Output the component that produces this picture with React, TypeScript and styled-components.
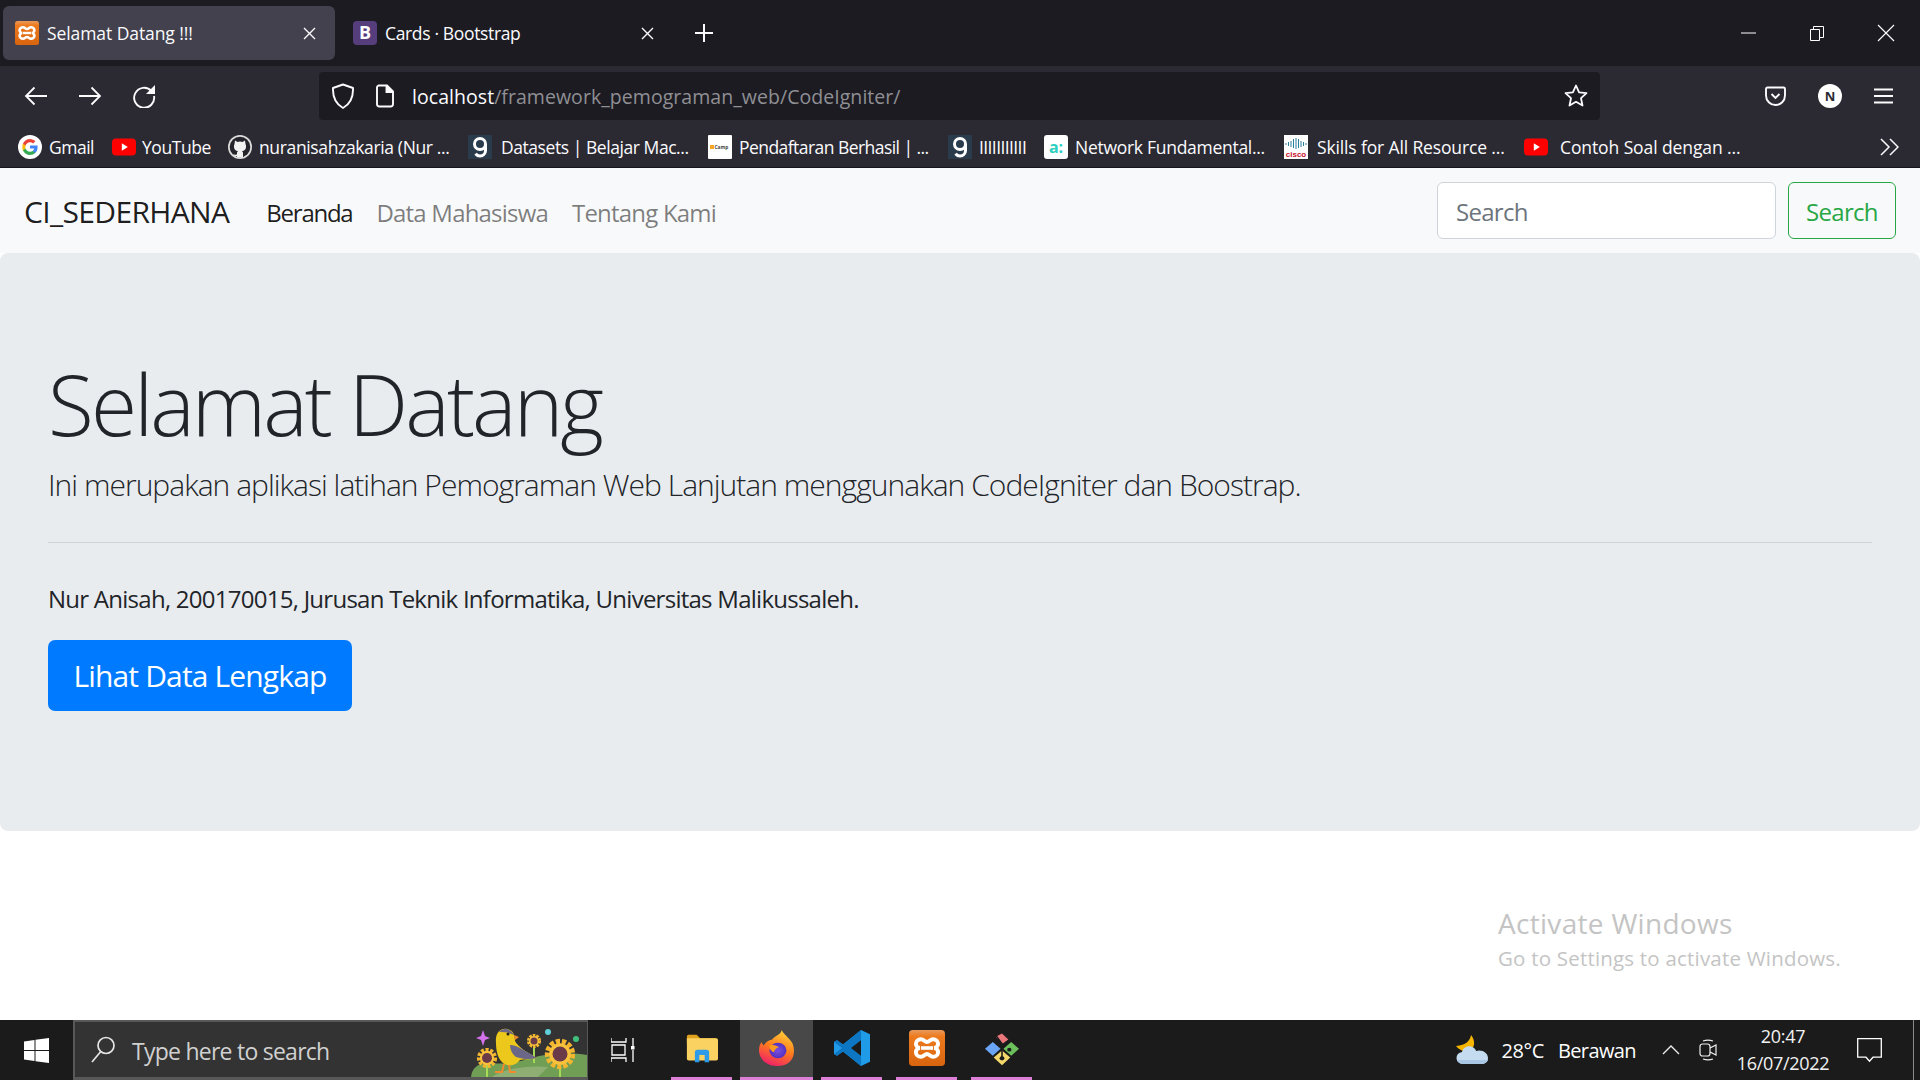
import React from 'react';
import styled, { createGlobalStyle } from 'styled-components';

const Global = createGlobalStyle`
  html, body { margin: 0; padding: 0; background: #fff; }
  body { font-family: "Open Sans", "Noto Sans", "Liberation Sans", sans-serif; color: #212529; }
  * { box-sizing: border-box; }
`;

const Screen = styled.div`
  position: relative; width: 1920px; height: 1080px; overflow: hidden;
  display: flex; flex-direction: column;
`;

/* ---------- browser chrome ---------- */
const TabStrip = styled.div`
  height: 66px; background: #1c1b22; display: flex; padding: 6px 0 6px 3px; flex: none;
`;
const Tab = styled.div<{ $active?: boolean; $w: number }>`
  width: ${p => p.$w}px; height: 54px; border-radius: 6px;
  background: ${p => (p.$active ? '#42414d' : 'transparent')};
  display: flex; align-items: center; padding: 0 19px 0 ${p => (p.$active ? 12 : 18)}px; gap: 8px; color: #fbfbfe;
`;
const TabTitle = styled.span<{ $active?: boolean }>`
  flex: 1; font-size: 17.5px; letter-spacing: ${p => (p.$active ? '-0.08px' : '-0.35px')}; white-space: nowrap;
`;
const NewTab = styled.div`
  width: 24px; height: 54px; margin-left: 19px; display: flex; align-items: center; justify-content: center;
`;
const WindowControls = styled.div`
  margin-left: auto; display: flex; align-items: center; height: 54px;
`;
const WinBtn = styled.div`
  width: 68.5px; display: flex; justify-content: center; align-items: center;
`;

const Toolbar = styled.div`
  height: 60px; background: #2b2a33; display: flex; align-items: center; padding: 0 0 0 24px; flex: none;
`;
const NavIcon = styled.div`
  width: 54px; display: flex; align-items: center; justify-content: flex-start; flex: none;
`;
const UrlBar = styled.div`
  margin-left: 133px; width: 1281px; height: 48px; background: #1c1b22; border-radius: 4px;
  display: flex; align-items: center; padding: 0 12px 0 12px; gap: 20px; color: #fbfbfe;
`;
const UrlText = styled.div`
  margin-left: -3px; flex: 1; font-size: 19.5px; letter-spacing: 0.05px; white-space: nowrap;
`;
const UrlDim = styled.span`
  color: #8f8f94;
`;
const RightTools = styled.div`
  margin-left: 165px; display: flex; align-items: center; gap: 32px;
`;

const BookmarkBar = styled.div`
  height: 42px; background: #2b2a33; display: flex; align-items: center; padding: 0 0 0 18px; flex: none;
  border-bottom: 1px solid #15141a; color: #fbfbfe;
`;
const Bookmark = styled.div<{ $w: number; $gap: number }>`
  width: ${p => p.$w}px; flex: none; display: flex; align-items: center; gap: ${p => p.$gap}px;
`;
const BookmarkLabel = styled.span<{ $ls: number }>`
  font-size: 17.5px; letter-spacing: ${p => p.$ls}px; white-space: nowrap;
`;
const Overflow = styled.div`
  margin-left: auto; margin-right: 21px; display: flex;
`;

/* ---------- page ---------- */
const Navbar = styled.nav`
  height: 85px; background: #f8f9fa; display: flex; align-items: center; padding: 0 24px; flex: none;
`;
const Brand = styled.div`
  font-size: 30px; color: rgba(0,0,0,.9); letter-spacing: -0.65px; margin-right: 37px; white-space: nowrap; padding-top: 2px;
`;
const NavLink = styled.div<{ $active?: boolean }>`
  font-size: 24px; letter-spacing: ${p => (p.$active ? '-1.25px' : '-0.8px')}; margin-right: 24px; white-space: nowrap; padding-top: 3px;
  color: ${p => (p.$active ? 'rgba(0,0,0,.9)' : 'rgba(0,0,0,.5)')};
`;
const SearchForm = styled.div`
  margin-left: auto; display: flex; gap: 12px;
`;
const SearchInput = styled.div`
  width: 339px; height: 57px; background: #fff; border: 1.5px solid #ced4da; border-radius: 6px;
  display: flex; align-items: center; padding: 2px 18px 0; font-size: 24px; color: #6c757d; letter-spacing: -0.7px;
`;
const SearchButton = styled.div`
  width: 108px; height: 57px; border: 1.5px solid #28a745; border-radius: 6px; padding-top: 2px;
  display: flex; align-items: center; justify-content: center; font-size: 24px; color: #28a745; letter-spacing: -0.7px;
`;
const Jumbotron = styled.section`
  height: 578px; background: #e9ecef; border-radius: 8px; padding: 101px 48px 0; flex: none;
`;
const Display = styled.h1`
  margin: 0; font-weight: 300; font-size: 84px; line-height: 100px; color: #212529; letter-spacing: -2.9px;
`;
const Lead = styled.p`
  margin: 8px 0 0; font-weight: 300; font-size: 30px; line-height: 45px; letter-spacing: -0.98px;
`;
const Rule = styled.hr`
  margin: 35px 0 0; border: 0; border-top: 1.5px solid rgba(0,0,0,.1);
`;
const Info = styled.p`
  margin: 38px 0 0; font-size: 24px; line-height: 36px; letter-spacing: -0.74px;
`;
const Primary = styled.div`
  margin-top: 23px; width: 304px; height: 71px; border-radius: 7px; background: #007bff; color: #fff;
  display: flex; align-items: center; justify-content: center; font-size: 30px; letter-spacing: -0.85px;
`;
const Blank = styled.div`
  flex: 1; background: #fff;
`;
const Activate = styled.div`
  position: absolute; left: 1498px; top: 905px; color: #c4c4c4; white-space: nowrap;
`;
const ActivateTitle = styled.div`
  font-size: 28px; line-height: 36px; letter-spacing: 0.3px;
`;
const ActivateSub = styled.div`
  margin-top: 3px; font-size: 20.5px; line-height: 28px; letter-spacing: 0.2px;
`;

/* ---------- taskbar ---------- */
const Taskbar = styled.footer`
  height: 60px; background: #1b1b1b; display: flex; align-items: stretch; flex: none; color: #fff;
`;
const StartBtn = styled.div`
  width: 73px; display: flex; align-items: center; justify-content: center;
`;
const SearchBox = styled.div`
  position: relative; width: 515px; background: #333; border: 2px solid #585858; border-bottom-width: 3px; border-right-width: 1px;
  display: flex; align-items: center; padding-left: 16px; gap: 17px; color: #d0d0d0; overflow: hidden;
`;
const SearchHint = styled.span`
  font-size: 23px; letter-spacing: -0.75px; padding-top: 2px;
`;
const SearchArt = styled.div`
  position: absolute; right: 0; bottom: 0; display: flex;
`;
const TaskView = styled.div`
  width: 83px; display: flex; align-items: center; justify-content: center; padding-right: 11px;
`;
const AppSlot = styled.div<{ $active?: boolean; $w: number; $next: number }>`
  position: relative; width: ${p => p.$w}px; margin-right: ${p => p.$next}px;
  display: flex; align-items: center; justify-content: center; padding-bottom: 2px;
  background: ${p => (p.$active ? '#484848' : 'transparent')};
  border-bottom: 3px solid #dd7fd6;
`;
const Tray = styled.div`
  margin-left: auto; display: flex; align-items: center;
`;
const WeatherTemp = styled.span`
  margin-left: 12px; font-size: 20px; letter-spacing: -0.4px; white-space: nowrap;
`;
const WeatherText = styled.span`
  margin-left: 14px; margin-right: 26px; font-size: 20px; letter-spacing: -0.6px; white-space: nowrap;
`;
const MeetSlot = styled.span`
  margin-left: 19px; display: flex;
`;
const Clock = styled.div`
  width: 100px; margin-left: 16px; margin-right: 24px; text-align: center; font-size: 18px; line-height: 27px; letter-spacing: -0.3px; color: #f2f2f2;
`;
const Desk = styled.div`
  width: 1px; background: #8a8a8a; margin-left: 31px; margin-right: 6px; align-self: stretch;
`;

/* ---------- drawn icons ---------- */
const Xampp = ({ size = 24, id }: { size?: number; id: string }) => (
  <svg width={size} height={size} viewBox="0 0 24 24">
    <defs>
      <linearGradient id={id} x1="0" y1="0" x2="0" y2="1">
        <stop offset="0" stopColor="#e89a5c" /><stop offset="0.18" stopColor="#ee7a1e" /><stop offset="1" stopColor="#d8650f" />
      </linearGradient>
    </defs>
    <rect width="24" height="24" rx="2.5" fill={`url(#${id})`} />
    <path d="M8 6.200c2 0 2.400 1.800 4 1.800s2-1.800 4-1.800 3.400 1.500 3.400 3-1.400 2.800-2.800 2.800c1.400 0 2.800 1.300 2.800 2.800s-1.400 3-3.400 3-2.400-1.800-4-1.800-2 1.800-4 1.800-3.400-1.500-3.400-3S6 12 7.400 12C6 12 4.600 10.700 4.600 9.200s1.400-3 3.400-3z" fill="none" stroke="#fff" strokeWidth="2.600" />
    <path d="M8 12h8" stroke="#fff" strokeWidth="2.400" />
  </svg>
);
const BootstrapIcon = () => (
  <svg width="24" height="24" viewBox="0 0 24 24">
    <rect width="24" height="24" rx="4" fill="#563d7c" />
    <text x="12" y="18" textAnchor="middle" fontFamily="Open Sans, sans-serif" fontWeight="700" fontSize="18" fill="#fff">B</text>
  </svg>
);
const Gmail = () => (
  <svg width="24" height="24" viewBox="0 0 24 24">
    <circle cx="12" cy="12" r="12" fill="#fff" />
    <path d="M19.600 12.200c0-.6-.05-1.100-.15-1.600H12v3h4.300c-.2 1-.75 1.800-1.600 2.400v2h2.500c1.500-1.400 2.400-3.400 2.400-5.800z" fill="#4285f4" />
    <path d="M12 20c2.150 0 3.950-.7 5.200-1.950l-2.500-2c-.7.470-1.600.750-2.700.750-2.100 0-3.800-1.400-4.450-3.300H4.950v2C6.250 18.100 8.900 20 12 20z" fill="#34a853" />
    <path d="M7.550 13.500c-.33-1-.33-2 0-3v-2H4.950c-.87 1.700-.87 5.300 0 7z" fill="#fbbc05" />
    <path d="M12 7.200c1.200 0 2.250.4 3.100 1.200l2.200-2.200C15.950 4.950 14.150 4 12 4 8.900 4 6.250 5.900 4.950 8.500l2.600 2C8.200 8.600 9.900 7.200 12 7.200z" fill="#ea4335" />
  </svg>
);
const YouTube = () => (
  <svg width="24" height="24" viewBox="0 0 24 24">
    <rect y="3.500" width="24" height="17" rx="4" fill="#f00" />
    <path d="M9.800 8.300v7.400l6-3.700z" fill="#fff" />
  </svg>
);
const GithubIcon = () => (
  <svg width="24" height="24" viewBox="0 0 24 24">
    <circle cx="12" cy="12" r="12" fill="#dcdcdc" />
    <circle cx="12" cy="12" r="10.300" fill="#24242a" />
    <path d="M7 5.500 9.500 7a8 8 0 0 1 5 0L17 5.500l.5 3.500a5 5 0 0 1 .5 3c0 2.500-2 4-4 4.300.6.5 1 1 1 2v4.200H9v-1.300c-2 .3-3-.5-4-2.200 1 .3 2 1 4 .6v-1.300c0-1 .4-1.500 1-2C8 16 6 14.500 6 12a5 5 0 0 1 .5-3z" fill="#f2f2f2" />
  </svg>
);
const Dicoding = () => (
  <svg width="24" height="24" viewBox="0 0 24 24">
    <rect width="24" height="24" fill="#2a3b4c" />
    <circle cx="12" cy="9" r="5.500" fill="none" stroke="#fff" strokeWidth="3" />
    <path d="M17.500 9v6.500c0 3.200-2.400 5.500-5.500 5.500-1.900 0-3.400-.8-4.500-2.200" fill="none" stroke="#fff" strokeWidth="3" />
  </svg>
);
const DCamp = () => (
  <svg width="24" height="24" viewBox="0 0 24 24">
    <rect width="24" height="24" rx="1" fill="#fff" />
    <rect x="2" y="10" width="4" height="4" fill="#f5a623" />
    <text x="6.500" y="14" fontFamily="Open Sans, sans-serif" fontWeight="700" fontSize="4.800" fill="#444">Camp</text>
  </svg>
);
const Academy = () => (
  <svg width="24" height="24" viewBox="0 0 24 24">
    <rect width="24" height="24" rx="3" fill="#fff" />
    <text x="12" y="18" textAnchor="middle" fontFamily="Open Sans, sans-serif" fontWeight="700" fontSize="16" fill="#2ccfc0">a:</text>
  </svg>
);
const Cisco = () => (
  <svg width="24" height="24" viewBox="0 0 24 24">
    <rect width="24" height="24" fill="#fff" />
    {[2, 4.500, 7, 9.500, 12, 14.500, 17, 19.500, 22].map((x, i) => (
      <path key={x} d={`M${x} ${9 - [1, 2, 3, 5, 6, 5, 3, 2, 1][i]}v${[2, 4, 6, 9, 11, 9, 6, 4, 2][i]}`} stroke="#2a7f9e" strokeWidth="1" />
    ))}
    <text x="12" y="22" textAnchor="middle" fontFamily="Liberation Sans, sans-serif" fontWeight="700" fontSize="8" fill="#c8102e">cisco</text>
  </svg>
);

const Back = () => (
  <svg width="24" height="24" viewBox="0 0 24 24" fill="none" stroke="#fbfbfe" strokeWidth="1.800">
    <path d="M23 12H2M10.500 3.500 2 12l8.500 8.500" />
  </svg>
);
const Forward = () => (
  <svg width="24" height="24" viewBox="0 0 24 24" fill="none" stroke="#fbfbfe" strokeWidth="1.800">
    <path d="M1 12h21M13.500 3.500 22 12l-8.500 8.500" />
  </svg>
);
const Reload = () => (
  <svg width="24" height="24" viewBox="0 0 24 24">
    <path d="M19.500 7A10 10 0 1 0 22 12" fill="none" stroke="#fbfbfe" strokeWidth="1.900" />
    <path d="M23 1v9h-9z" fill="#fbfbfe" />
  </svg>
);
const Shield = () => (
  <svg width="24" height="26" viewBox="0 0 24 26" fill="none" stroke="#fbfbfe" strokeWidth="1.900">
    <path d="M12 1.500 2 5c-.4 9 1.800 15.500 10 20 8.200-4.500 10.400-11 10-20z" strokeLinejoin="round" />
  </svg>
);
const PageIcon = () => (
  <svg width="20" height="24" viewBox="0 0 20 24" fill="none" stroke="#fbfbfe" strokeWidth="1.900">
    <path d="M4 1.500h8l6 6V20a2.500 2.500 0 0 1-2.500 2.500h-11A2.500 2.500 0 0 1 2 20V3.500a2 2 0 0 1 2-2z" />
    <path d="M11.500 1.500v6.500H18" fill="#fbfbfe" />
  </svg>
);
const Star = () => (
  <svg width="24" height="24" viewBox="0 0 24 24" fill="none" stroke="#fbfbfe" strokeWidth="1.800" strokeLinejoin="round">
    <path d="m12 1.500 3.100 6.900 7.400.8-5.500 5 1.500 7.300-6.500-3.700-6.500 3.700L7 14.200l-5.500-5 7.400-.8z" />
  </svg>
);
const Pocket = () => (
  <svg width="21" height="21" viewBox="0 0 21 21" fill="none" stroke="#fbfbfe" strokeWidth="1.900">
    <path d="M2.500 1.500h16A1.500 1.500 0 0 1 20 3v6.500a9.500 9.500 0 0 1-19 0V3a1.500 1.500 0 0 1 1.500-1.500z" />
    <path d="m6.500 8 4 4 4-4" />
  </svg>
);
const Avatar = () => (
  <svg width="24" height="24" viewBox="0 0 24 24">
    <circle cx="12" cy="12" r="12" fill="#fff" />
    <text x="12" y="17" textAnchor="middle" fontFamily="Open Sans, sans-serif" fontWeight="700" fontSize="13" fill="#2b2a33">N</text>
  </svg>
);
const Burger = () => (
  <svg width="19" height="16" viewBox="0 0 19 16" stroke="#fbfbfe" strokeWidth="2">
    <path d="M0 1.500h19M0 8h19M0 14.500h19" />
  </svg>
);
const Close = () => (
  <svg width="13" height="13" viewBox="0 0 13 13" stroke="#fbfbfe" strokeWidth="1.400"><path d="m1 1 11 11M12 1 1 12" /></svg>
);
const Plus = () => (
  <svg width="18" height="18" viewBox="0 0 18 18" stroke="#fbfbfe" strokeWidth="2"><path d="M9 0v18M0 9h18" /></svg>
);
const Chevrons = () => (
  <svg width="19" height="18" viewBox="0 0 19 18" fill="none" stroke="#fbfbfe" strokeWidth="1.500"><path d="m1 1 8 8-8 8M10 1l8 8-8 8" /></svg>
);

const WinLogo = () => (
  <svg width="25" height="25" viewBox="0 0 25 25" fill="#fff">
    <path d="M0 3.500 10.500 2v10H0zM11.500 1.800 25 0v12H11.500zM0 13h10.500v10L0 21.500zM11.500 13H25v12l-13.500-1.800z" />
  </svg>
);
const Magnifier = () => (
  <svg width="24" height="27" viewBox="0 0 24 27" fill="none" stroke="#e6e6e6" strokeWidth="1.700">
    <circle cx="15" cy="9.500" r="8" /><path d="M9.800 15.500 1 26" />
  </svg>
);
const TaskViewIcon = () => (
  <svg width="26" height="24" viewBox="0 0 26 24" fill="none" stroke="#fff" strokeWidth="1.300">
    <path d="M0 4h15V0M0 4V0M1 7h13v10H1zM0 24v-4h15v4M22 0v8M22 12v12" />
    <rect x="20" y="8" width="3.500" height="3.500" fill="#fff" stroke="none" />
  </svg>
);
const Explorer = () => (
  <svg width="32" height="32" viewBox="0 0 36 32">
    <path d="M1 3a2 2 0 0 1 2-2h9l4 4h18v6H1z" fill="#e0a21c" />
    <path d="M1 5h33a2 2 0 0 1 2 2v21a2 2 0 0 1-2 2H3a2 2 0 0 1-2-2z" fill="#fad262" />
    <path d="M10 32v-11a3 3 0 0 1 3-3h10a3 3 0 0 1 3 3v11h-5v-8h-6v8z" fill="#2d9be8" />
  </svg>
);
const Firefox = () => (
  <svg width="36" height="36" viewBox="0 0 38 42" preserveAspectRatio="none">
    <defs>
      <linearGradient id="ff1" x1="0.7" y1="0" x2="0.3" y2="1">
        <stop offset="0" stopColor="#ffd23a" /><stop offset="0.5" stopColor="#ff7a1d" /><stop offset="1" stopColor="#f01d6b" />
      </linearGradient>
      <radialGradient id="ff2" cx="0.5" cy="0.5" r="0.6">
        <stop offset="0" stopColor="#7b4fe0" /><stop offset="1" stopColor="#4b2bb8" />
      </radialGradient>
    </defs>
    <path d="M24 0c1 4 8 9 11 15 4 9 3 27-16 27C7 42 0 33 0 24c0-6 2-9 3-10 0 2 1 3 2 4 2-4 5-6 9-7 2-4 9-5 10-11z" fill="url(#ff1)" />
    <circle cx="20" cy="24" r="9" fill="url(#ff2)" />
    <path d="M11 18c4-1 7 0 10 2-3 1-5 3-5 6-3-1-5-4-5-8z" fill="#ff9a1f" />
  </svg>
);
const VSCode = () => (
  <svg width="36" height="36" viewBox="0 0 36 42" preserveAspectRatio="none">
    <path d="M27 0 36 5v32l-9 5L9 25 3 30 0 28V14l3-2 6 5z" fill="#1f9be8" />
    <path d="M27 0v42L9 25 3 30 0 28l8-7-8-7 3-2 6 5z" fill="#0d77c4" />
    <path d="M27 12v18l-10-9z" fill="#1b1b1b" />
  </svg>
);
const Kraken = () => (
  <svg width="36" height="36" viewBox="0 0 37 42" preserveAspectRatio="none">
    <path d="M9 14 1 22l8 8 8-8z" fill="#6aa5f5" />
    <path d="M28 14l-8 8 8 8 8-8z" fill="#6cc05c" />
    <path d="M18.500 24 10 32l8.500 9L27 32z" fill="#f3d76a" />
    <path d="M18.500 4 12 8l7 8 6-5z" fill="#e8767a" />
    <path d="M12 6l9 14M18.500 20v14" stroke="#1b1b1b" strokeWidth="1.600" />
    <circle cx="18.500" cy="33" r="2.500" fill="#1b1b1b" /><circle cx="26" cy="23" r="2.200" fill="#1b1b1b" />
  </svg>
);
const Flower = ({ x, y, r, dash }: { x: number; y: number; r: number; dash: string }) => (
  <g>
    <circle cx={x} cy={y} r={r * 0.8} fill="none" stroke="#f4b52f" strokeWidth={r * 0.42} strokeDasharray={dash} />
    <circle cx={x} cy={y} r={r * 0.72} fill="#f9c23c" />
    <circle cx={x} cy={y} r={r * 0.5} fill="#6b3a48" />
  </g>
);
const Bird = () => (
  <svg width="121" height="56" viewBox="0 0 121 56">
    <path d="M5 56c1-9 7-14 17-14 12 1 24 1 40-4 14-5 40-8 59-4v22z" fill="#6f9e54" />
    <path d="M26 56c10-8 36-12 56-10l-10 10z" fill="#8fae74" />
    <path d="M20 42h2v14h-2zM67 24h2v18h-2zM93 40h2v16h-2z" fill="#a7d957" />
    <Flower x={21} y={37} r={10} dash="3 1.500" />
    <Flower x={68} y={20} r={7} dash="2.500 1" />
    <Flower x={94} y={33} r={15} dash="4 1.800" />
    <path d="M30 22C29 12 34 7 41 8c6 1 8 6 8 12 3 6 13 12 22 17-7 2-13 1-17 2-4 6-12 7-17 3-5-4-7-12-7-20z" fill="#ecc81c" />
    <path d="M44 24c8 0 18 8 27 13-7 2-15 1-21-1-4-3-6-8-6-12z" fill="#6a6788" />
    <path d="M33 11c3-4 11-5 15 3-5-3-10-3-15-3z" fill="#6a6788" />
    <circle cx="42" cy="13" r="1.500" fill="#222" />
    <path d="M48 14l5 2-4 3z" fill="#f08a2c" />
    <path d="M38 43l-2 8h-7M43 44l1 7h6" stroke="#f08a2c" strokeWidth="2" fill="none" />
    <path d="M17 9l2 6 5 2-5 2-2 6-2-6-5-2 5-2z" fill="#d271ea" />
    <circle cx="82" cy="11" r="3" fill="#5fd0d8" /><circle cx="110" cy="18" r="3" fill="#3fc07a" />
  </svg>
);
const Weather = () => (
  <svg width="34" height="30" viewBox="0 0 34 30">
    <path d="M16 0c-1 6-5 10-15 11 3 4 8 6 12 5 7-2 8-10 3-16z" fill="#f7b500" />
    <path d="M8 29a6 6 0 0 1-1-12c1-5 7-8 12-4 1 1 2 2 2 3 6-2 12 2 12 7 0 4-3 6-7 6z" fill="#c5dbf0" />
    <path d="M8 29c-3 0-5-2-6-4h31c-1 2-3 4-7 4z" fill="#a9c6e4" />
  </svg>
);
const Chevron = () => (
  <svg width="18" height="10" viewBox="0 0 18 10" fill="none" stroke="#eee" strokeWidth="1.300"><path d="m1 9 8-8 8 8" /></svg>
);
const Meet = () => (
  <svg width="18" height="22" viewBox="0 0 18 22" fill="none" stroke="#eee" strokeWidth="1.200">
    <rect x="1" y="5" width="10" height="12" rx="2.500" /><path d="m11 9 6-3v10l-6-3M4 2c3-1 7-1 10 0M4 20c3 1 7 1 10 0" />
  </svg>
);
const Notification = () => (
  <svg width="25" height="25" viewBox="0 0 25 25" fill="none" stroke="#fff" strokeWidth="1.300">
    <path d="M.7.700h23.600v18.500H16l-3.500 4-3.500-4H.7z" />
  </svg>
);

const bookmarks: [React.ReactNode, string, number, number, number][] = [
  [<Gmail key="g" />, 'Gmail', 94, 7, -0.5],
  [<YouTube key="y" />, 'YouTube', 116, 6, -0.45],
  [<GithubIcon key="h" />, 'nuranisahzakaria (Nur ...', 240, 7, -0.36],
  [<Dicoding key="d" />, 'Datasets | Belajar Mac...', 240, 9, -0.44],
  [<DCamp key="c" />, 'Pendaftaran Berhasil | ...', 240, 7, -0.55],
  [<Dicoding key="d2" />, 'IIIIIIIIIII', 96, 7, -0.6],
  [<Academy key="a" />, 'Network Fundamental...', 240, 7, -0.28],
  [<Cisco key="s" />, 'Skills for All Resource ...', 240, 9, -0.14],
  [<YouTube key="y2" />, 'Contoh Soal dengan ...', 240, 12, -0.1],
];

export default function App() {
  return (
    <Screen>
      <Global />
      <TabStrip>
        <Tab $active $w={332}>
          <Xampp id="xtab" />
          <TabTitle $active>Selamat Datang !!!</TabTitle>
          <Close />
        </Tab>
        <Tab $w={338}>
          <BootstrapIcon />
          <TabTitle>Cards · Bootstrap</TabTitle>
          <Close />
        </Tab>
        <NewTab><Plus /></NewTab>
        <WindowControls>
          <WinBtn><svg width="15" height="2" viewBox="0 0 15 2"><path d="M0 1h15" stroke="#fff" strokeWidth="1" /></svg></WinBtn>
          <WinBtn>
            <svg width="14" height="15" viewBox="0 0 14 15" fill="none" stroke="#fff" strokeWidth="1"><path d="M.5 3.500h9v11h-9zM3.500 3.500V.5h10v11h-4" /></svg>
          </WinBtn>
          <WinBtn><svg width="18" height="18" viewBox="0 0 18 18" stroke="#fff" strokeWidth="1.100"><path d="m1 1 16 16M17 1 1 17" /></svg></WinBtn>
        </WindowControls>
      </TabStrip>
      <Toolbar>
        <NavIcon><Back /></NavIcon>
        <NavIcon><Forward /></NavIcon>
        <NavIcon><Reload /></NavIcon>
        <UrlBar>
          <Shield />
          <PageIcon />
          <UrlText>localhost<UrlDim>/framework_pemograman_web/CodeIgniter/</UrlDim></UrlText>
          <Star />
        </UrlBar>
        <RightTools>
          <Pocket />
          <Avatar />
          <Burger />
        </RightTools>
      </Toolbar>
      <BookmarkBar>
        {bookmarks.map(([icon, label, w, gap, ls]) => (
          <Bookmark key={label + w} $w={w} $gap={gap}>{icon}<BookmarkLabel $ls={ls}>{label}</BookmarkLabel></Bookmark>
        ))}
        <Overflow><Chevrons /></Overflow>
      </BookmarkBar>
      <Navbar>
        <Brand>CI_SEDERHANA</Brand>
        <NavLink $active>Beranda</NavLink>
        <NavLink>Data Mahasiswa</NavLink>
        <NavLink>Tentang Kami</NavLink>
        <SearchForm>
          <SearchInput>Search</SearchInput>
          <SearchButton>Search</SearchButton>
        </SearchForm>
      </Navbar>
      <Jumbotron>
        <Display>Selamat Datang</Display>
        <Lead>Ini merupakan aplikasi latihan Pemograman Web Lanjutan menggunakan CodeIgniter dan Boostrap.</Lead>
        <Rule />
        <Info>Nur Anisah, 200170015, Jurusan Teknik Informatika, Universitas Malikussaleh.</Info>
        <Primary>Lihat Data Lengkap</Primary>
      </Jumbotron>
      <Blank />
      <Taskbar>
        <StartBtn><WinLogo /></StartBtn>
        <SearchBox>
          <Magnifier />
          <SearchHint>Type here to search</SearchHint>
          <SearchArt><Bird /></SearchArt>
        </SearchBox>
        <TaskView><TaskViewIcon /></TaskView>
        <AppSlot $w={61} $next={8}><Explorer /></AppSlot>
        <AppSlot $active $w={73} $next={8}><Firefox /></AppSlot>
        <AppSlot $w={61} $next={14}><VSCode /></AppSlot>
        <AppSlot $w={61} $next={14}><Xampp id="xapp" size={36} /></AppSlot>
        <AppSlot $w={61} $next={0}><Kraken /></AppSlot>
        <Tray>
          <Weather />
          <WeatherTemp>28°C</WeatherTemp>
          <WeatherText>Berawan</WeatherText>
          <Chevron />
          <MeetSlot><Meet /></MeetSlot>
          <Clock>20:47<br />16/07/2022</Clock>
          <Notification />
          <Desk />
        </Tray>
      </Taskbar>
      <Activate>
        <ActivateTitle>Activate Windows</ActivateTitle>
        <ActivateSub>Go to Settings to activate Windows.</ActivateSub>
      </Activate>
    </Screen>
  );
}
